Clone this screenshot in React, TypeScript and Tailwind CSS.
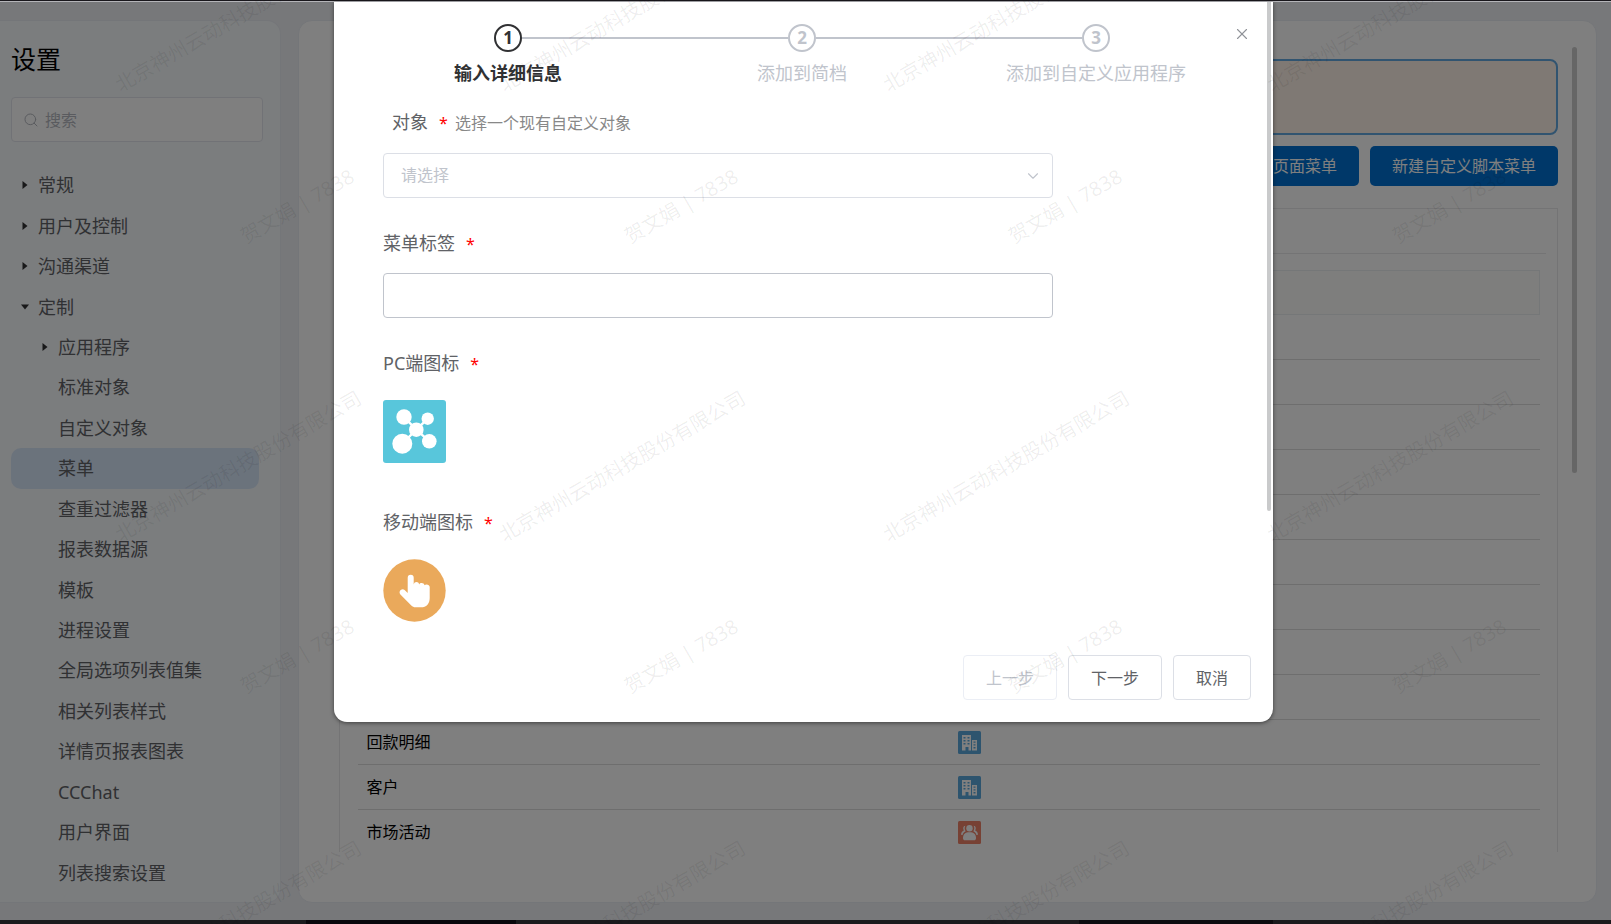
import { useState } from 'react'
import { Search, ChevronDown, X } from 'lucide-react'

type MenuItem = { label: string; level: 0 | 1; caret?: 'right' | 'down' }

const menuItems: MenuItem[] = [
  { label: '常规', level: 0, caret: 'right' },
  { label: '用户及控制', level: 0, caret: 'right' },
  { label: '沟通渠道', level: 0, caret: 'right' },
  { label: '定制', level: 0, caret: 'down' },
  { label: '应用程序', level: 1, caret: 'right' },
  { label: '标准对象', level: 1 },
  { label: '自定义对象', level: 1 },
  { label: '菜单', level: 1 },
  { label: '查重过滤器', level: 1 },
  { label: '报表数据源', level: 1 },
  { label: '模板', level: 1 },
  { label: '进程设置', level: 1 },
  { label: '全局选项列表值集', level: 1 },
  { label: '相关列表样式', level: 1 },
  { label: '详情页报表图表', level: 1 },
  { label: 'CCChat', level: 1 },
  { label: '用户界面', level: 1 },
  { label: '列表搜索设置', level: 1 },
]

const tableRows = [
  { label: '', icon: '' },
  { label: '', icon: '' },
  { label: '', icon: '' },
  { label: '', icon: '' },
  { label: '', icon: '' },
  { label: '', icon: '' },
  { label: '', icon: '' },
  { label: '', icon: '' },
  { label: '', icon: '' },
  { label: '', icon: '' },
  { label: '回款明细', icon: 'building' },
  { label: '客户', icon: 'building' },
  { label: '市场活动', icon: 'people' },
]

const steps = ['输入详细信息', '添加到简档', '添加到自定义应用程序']

const companyMarks = [238, 622, 1006, 1390].flatMap(x => [16, 466, 916].map(y => ({ x, y })))
const userMarks = [297, 681, 1065, 1449].flatMap(x => [206, 656].map(y => ({ x, y })))

function App() {
  const [active, setActive] = useState('菜单')

  return (
    <div className="h-screen flex flex-col relative overflow-hidden bg-[#eef0f5] font-['Noto_Sans','Noto_Sans_CJK_SC',sans-serif]">
      <div className="h-px shrink-0 bg-[#19171c]" />
      <div className="h-px shrink-0 bg-[#b4b4b8]" />

      <div className="flex-1 min-h-0 relative flex gap-[17px] pt-[18px] pb-[17px] pr-[14px]">
        <Sidebar active={active} onSelect={setActive} />
        <MenuList />
        <div className="absolute inset-0 bg-black/50 flex items-start justify-center pr-1">
          <NewMenuDialog />
        </div>
      </div>

      <div className="h-1 shrink-0 flex bg-[#1b1a1d]">
        <span className="w-[19%]" />
        <span className="w-[13%] bg-[#09060b]" />
        <span className="w-[35%]" />
        <span className="w-[12%] bg-[#0d0b0f]" />
      </div>

      <Watermark />
    </div>
  )
}

const Sidebar = ({ active, onSelect }: { active: string, onSelect: (label: string) => void }) => (
  <aside className="w-[281px] shrink-0 flex flex-col bg-[#f7fafd] border-y border-r border-[#e9ecf2] rounded-r-[14px] pt-5 pb-[9px] pl-[11px]">
    <h1 className="text-[25px] leading-9 text-black">设置</h1>
    <label className="mt-5 mr-[17px] h-[45px] flex items-center gap-1.5 px-[11px] bg-white border border-[#e2e5ec] rounded">
      <Search className="w-4 h-4 text-[#b4b7be]" strokeWidth={1.5} />
      <input
        type="text"
        placeholder="搜索"
        aria-label="搜索"
        className="flex-1 min-w-0 text-base text-[#606266] placeholder:text-[#b4b7be] outline-none bg-transparent"
      />
    </label>
    <nav className="mt-[23px] mr-[21px] flex-1 flex flex-col">
      {menuItems.map(item => (
        <button
          key={item.label}
          type="button"
          onClick={() => onSelect(item.label)}
          className={`flex-1 flex items-center rounded-[10px] text-lg text-[#606266] text-left ${
            item.level === 1 ? 'pl-[30px]' : 'pl-[10px]'
          } ${active === item.label ? 'bg-[#d7e6f8]' : ''}`}
        >
          <span className="w-[17px] shrink-0">
            {item.caret && <Caret direction={item.caret} />}
          </span>
          {item.label}
        </button>
      ))}
    </nav>
  </aside>
)

const Caret = ({ direction }: { direction: 'right' | 'down' }) => (
  <svg viewBox="0 0 8 8" className="w-2 h-2 fill-[#303133]">
    {direction === 'right' ? <path d="M1.5 0 6.5 4l-5 4z" /> : <path d="M0 1.5h8l-4 5z" />}
  </svg>
)

const MenuList = () => (
  <main className="flex-1 min-w-0 relative flex flex-col bg-white border border-[#e9ecf2] rounded-[14px] pt-[38px] pb-[50px] pl-10 pr-[38px]">
    <div className="h-[76px] shrink-0 rounded-lg border-2 border-[#62a8e0] bg-[#fff3e9]" />
    <div className="mt-[11px] flex justify-end gap-[11px]">
      <PrimaryButton label="新建自定义页面菜单" />
      <PrimaryButton label="新建自定义脚本菜单" />
    </div>
    <section className="mt-[22px] flex-1 min-h-0 overflow-hidden border border-b-0 border-[#e8e8ea] px-[11px]">
      <div className="h-[45px] border-b border-[#e8e8ea]" />
      <div className="mt-4 px-[6px]">
        <table className="w-full table-fixed border-collapse text-base text-black">
          <tbody>
            {tableRows.map((row, i) => (
              <tr
                key={i}
                className={i === 0 ? 'h-11 bg-[#fdfdfa] border border-[#ebeef0]' : 'h-[45px] border-b border-[#dddddd]'}
              >
                <td className="px-[9px]">{row.label}</td>
                <td className="px-[9px]">
                  {row.icon === 'building' && <BuildingIcon />}
                  {row.icon === 'people' && <PeopleIcon />}
                </td>
              </tr>
            ))}
          </tbody>
        </table>
      </div>
    </section>
    <div className="absolute right-[19px] top-[26px] w-[5px] h-[426px] rounded-full bg-[#cccccc]" />
  </main>
)

const PrimaryButton = ({ label }: { label: string }) => (
  <button type="button" className="h-10 px-[22px] rounded-[5px] bg-[#0070d2] text-base text-white whitespace-nowrap">
    {label}
  </button>
)

const BuildingIcon = () => (
  <svg viewBox="0 0 23 23" className="w-[23px] h-[23px]">
    <rect width="23" height="23" rx="1.5" fill="#5ba8dd" />
    <path
      fill="#fff"
      fillRule="evenodd"
      d="M4 4h9v15.500h-2.500v-3.500h-3v3.500H4zM5.500 6v1.500h2V6zM9.500 6v1.500h2V6zM5.500 9v1.500h2V9zM9.500 9v1.500h2V9zM5.500 12v1.500h2V12zM9.500 12v1.500h2V12zM14 9h5v10.500h-5zM15.500 10.500v1.300h2v-1.300zM15.500 13.300v1.300h2v-1.300zM15.500 16.100v1.300h2v-1.300z"
    />
  </svg>
)

const PeopleIcon = () => (
  <svg viewBox="0 0 23 23" className="w-[23px] h-[23px]">
    <rect width="23" height="23" rx="1.5" fill="#ee8269" />
    <g fill="#fff">
      <circle cx="11.500" cy="7.200" r="3.200" />
      <path d="M5 17c0-3.800 2.200-5.800 6.500-5.800s6.500 2 6.500 5.800c0 1.700-.8 2.300-2 2.300H7c-1.200 0-2-.6-2-2.300z" />
      <path d="M7.300 4.800c-2.200.3-2.600 2.600-1.500 4.700-1.700.8-2.600 2-2.800 4.300l1.600.3c.4-1.900 1.300-3 3.100-3.800-1.200-1.700-1.400-3.700-.4-5.500zM15.700 4.800c2.200.3 2.600 2.600 1.500 4.700 1.700.8 2.600 2 2.800 4.300l-1.600.3c-.4-1.900-1.300-3-3.100-3.800 1.200-1.700 1.400-3.700.4-5.500z" />
    </g>
  </svg>
)

const NewMenuDialog = () => (
  <div
    role="dialog"
    aria-label="新建菜单"
    className="relative w-full max-w-[939px] bg-white rounded-b-[13px] shadow-[0_1px_4px_rgba(0,0,0,0.5)] pt-[22px] pb-[22px] pr-[22px]"
  >
    <ol className="flex pl-[27px] pr-2">
      {steps.map((step, i) => (
        <li
          key={step}
          className={`flex-1 flex flex-col items-center ${i === 0 ? 'text-[#303133] font-bold' : 'text-[#c0c4cc]'}`}
        >
          <div className="w-full flex items-center">
            <span className={`h-[2px] flex-1 ${i > 0 ? 'bg-[#c0c4cc]' : ''}`} />
            <span className="w-7 h-7 rounded-full border-2 border-current flex items-center justify-center text-[17px] font-bold">
              {i + 1}
            </span>
            <span className={`h-[2px] flex-1 ${i < steps.length - 1 ? 'bg-[#c0c4cc]' : ''}`} />
          </div>
          <span className="mt-2 text-lg leading-[27px] whitespace-nowrap">{step}</span>
        </li>
      ))}
    </ol>

    <button type="button" aria-label="关闭" className="absolute right-[22px] top-[23px] text-[#909399]">
      <X className="w-[18px] h-[18px]" strokeWidth={1.5} />
    </button>

    <form className="pl-[49px]" onSubmit={e => e.preventDefault()}>
      <div className="mt-[22px] pl-[9px] flex items-center text-lg leading-[27px] text-[#606266]">
        <label htmlFor="object">对象</label>
        <Required />
        <span className="ml-[9px] text-base text-[#888888]">选择一个现有自定义对象</span>
      </div>
      <div className="mt-[17px] relative w-full max-w-[670px]">
        <select
          id="object"
          defaultValue=""
          className="w-full h-[45px] appearance-none rounded border border-[#dcdfe6] bg-white px-[17px] pb-0.5 text-base text-[#c0c4cc] outline-none"
        >
          <option value="">请选择</option>
        </select>
        <ChevronDown className="absolute right-[11px] top-[14px] w-[18px] h-[18px] text-[#c0c4cc] pointer-events-none" strokeWidth={1.5} />
      </div>

      <FieldLabel htmlFor="menu-label" text="菜单标签" className="mt-8" />
      <input
        id="menu-label"
        type="text"
        className="mt-4 block w-full max-w-[670px] h-[45px] rounded border border-[#c0c4cc] px-[17px] text-base text-[#606266] outline-none"
      />

      <FieldLabel htmlFor="pc-icon" text="PC端图标" className="mt-8" />
      <button id="pc-icon" type="button" className="mt-[23px] block">
        <svg viewBox="0 0 63 63" className="w-[63px] h-[63px]">
          <rect width="63" height="63" rx="3" fill="#58c6db" />
          <path d="M21 17l12.300 12.700L44.700 18.700M19.300 43.700l14-14 13 11.600" stroke="#fff" strokeWidth="2.400" fill="none" />
          <g fill="#fff">
            <circle cx="21" cy="17" r="7.700" />
            <circle cx="44.700" cy="18.700" r="6.200" />
            <circle cx="33.300" cy="29.700" r="7.300" />
            <circle cx="19.300" cy="43.700" r="10" />
            <circle cx="46.300" cy="41.300" r="7.300" />
          </g>
        </svg>
      </button>

      <FieldLabel htmlFor="mobile-icon" text="移动端图标" className="mt-[46px]" />
      <button id="mobile-icon" type="button" className="mt-[23px] block">
        <svg viewBox="0 0 63 63" className="w-[63px] h-[63px]">
          <circle cx="31.500" cy="31.500" r="31.200" fill="#eaa95b" />
          <path
            fill="#fff"
            d="M24.700 18.700a3 3 0 0 1 6 0V25.500c.5-3.300 5-3.300 5.500 0 .8-2.300 5-1.900 5.300.8 1-1.500 5.200-1.200 5.200 1.800V39c0 6-3.500 9.300-8.500 9.300h-5.700c-1.700 0-3-.6-4.200-1.800L17.400 35.600c-2.300-2.800 1-6.800 4.200-4.600l3.100 3z"
          />
        </svg>
      </button>

      <div className="mt-[33px] flex justify-end gap-[11px] text-base">
        <button type="button" disabled className="h-[45px] px-[22px] rounded border border-[#ebeef5] text-[#c0c4cc]">
          上一步
        </button>
        <button type="submit" className="h-[45px] px-[22px] rounded border border-[#dcdfe6] text-[#606266]">
          下一步
        </button>
        <button type="button" className="h-[45px] px-[22px] rounded border border-[#dcdfe6] text-[#606266]">
          取消
        </button>
      </div>
    </form>

    <div className="absolute right-[2px] top-0 w-1 h-[509px] rounded-b-full bg-[#c9cacb]" />
  </div>
)

const Required = () => <span className="ml-[11px] w-[7px] text-base text-[#ff0000]">*</span>

const FieldLabel = ({ htmlFor, text, className }: { htmlFor: string, text: string, className: string }) => (
  <div className={`flex items-center text-lg leading-[27px] text-[#606266] ${className}`}>
    <label htmlFor={htmlFor}>{text}</label>
    <Required />
  </div>
)

/* Tilted company and user names laid over the whole window */
const Watermark = () => (
  <svg className="absolute inset-0 w-full h-full pointer-events-none" aria-hidden="true">
    <g fill="#000" fillOpacity="0.07" fontSize="20" textAnchor="middle" dominantBaseline="central">
      {companyMarks.map(({ x, y }) => (
        <text key={`c${x}-${y}`} transform={`translate(${x} ${y}) rotate(-30)`}>北京神州云动科技股份有限公司</text>
      ))}
      {userMarks.map(({ x, y }) => (
        <text key={`u${x}-${y}`} transform={`translate(${x} ${y}) rotate(-30)`}>贺文娟 | 7838</text>
      ))}
    </g>
  </svg>
)

export default App
